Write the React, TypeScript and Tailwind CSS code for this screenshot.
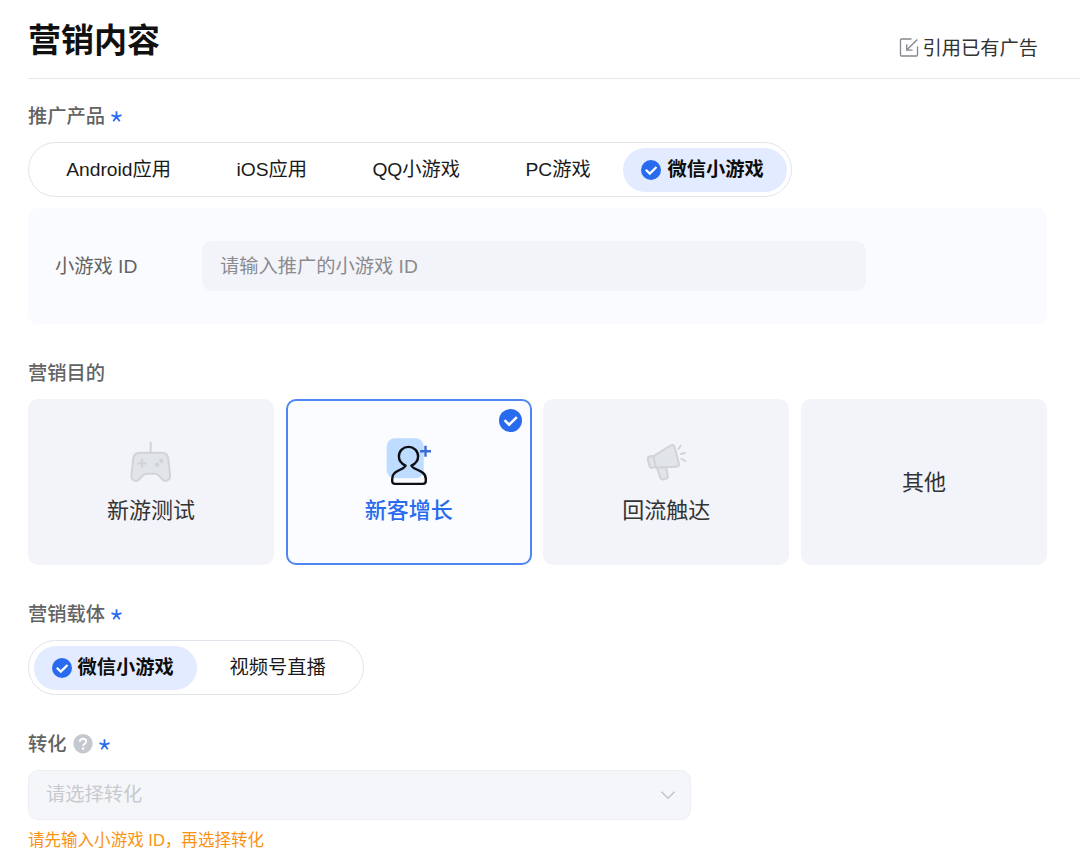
import type { ReactNode } from "react";
import clsx from "clsx";

const products = ["Android应用", "iOS应用", "QQ小游戏", "PC游戏", "微信小游戏"];
const carriers = ["微信小游戏", "视频号直播"];

function CheckBadge({ className }: { className?: string }) {
  return (
    <svg className={className} viewBox="0 0 20 20" fill="none">
      <circle cx="10" cy="10" r="10" fill="#296bef" />
      <path d="M4.8 9.700l4 3.900 6.700-6.600" stroke="#fff" strokeWidth="2.2" />
    </svg>
  );
}

function GamepadIcon() {
  return (
    <svg className="h-12 w-12" viewBox="0 0 48 48" fill="none" stroke="#d0d3d8" strokeWidth="2">
      <path
        d="M12.500 16.800h22.500c3.600 0 5.600 2 6.200 5.500l1.800 16.500c.6 5.400-4.800 8.200-8 4.400l-2.600-3c-1.400-1.700-2.600-2.500-4.700-2.500h-7.900c-2.100 0-3.300.8-4.700 2.500l-2.600 3c-3.200 3.800-8.600 1-8-4.400l1.800-16.500c.6-3.500 2.600-5.500 6.200-5.500z"
        fill="#e1e4e9"
      />
      <path d="M23.700 5.800v11" />
      <path d="M15 22.800v9M10.500 27.300h9" strokeWidth="2.200" />
      <circle cx="34.300" cy="24.700" r="2.200" fill="#d0d3d8" stroke="none" />
      <circle cx="30.300" cy="28.700" r="2.200" fill="#d0d3d8" stroke="none" />
    </svg>
  );
}

function NewUserIcon() {
  return (
    <svg className="h-12 w-12 overflow-visible" viewBox="0 0 48 48" fill="none">
      <rect x="1.700" y="2.300" width="37" height="40" rx="8" fill="#bedcff" />
      <path
        d="M20.600 29.700c-4-1.900-6.700-5.300-6.700-9.500 0-5.300 4.200-9.300 9.600-9.300s9.600 4 9.600 9.300c0 4.200-2.700 7.600-6.700 9.500 2.600 4.800 14.400 4.300 14.400 13.300v2c0 1.900-1 2.900-2.900 2.900H10.100c-1.900 0-2.900-1-2.900-2.900v-2c0-9 10.800-8.500 13.400-13.300z"
        stroke="#0d0f14"
        strokeWidth="2.400"
        strokeLinejoin="round"
      />
      <path d="M40.500 9.800v11M35 15.300h11" stroke="#3a6bd6" strokeWidth="2.400" />
    </svg>
  );
}

function MegaphoneIcon() {
  return (
    <svg className="h-12 w-12" viewBox="-.7 0 48 48" fill="none" stroke="#d0d3d8" strokeWidth="2" strokeLinecap="round" strokeLinejoin="round">
      <path d="M14.200 31.500l3.200 9.800c.7 2 2.300 2.600 4.200 2l1.400-.4c1.800-.6 2.400-1.700 2-3.500l-1.500-8.400z" fill="#e1e4e9" />
      <path d="M10.500 20.400L27.800 9.500c2-1.200 3.500-.6 4.100 1.500l4.300 16.200c.6 2.200-.6 3.500-2.900 3.500l-20.300.8z" fill="#e1e4e9" />
      <rect x="5.900" y="20.200" width="6" height="11.600" rx="2.500" transform="rotate(-14 8.900 26)" fill="#e1e4e9" />
      <path d="M36 12.600l2-2.900M38.200 18l4-.9M38.800 22.900l3.800 2.200" />
    </svg>
  );
}

const goals: { label: string; icon?: ReactNode }[] = [
  { label: "新游测试", icon: <GamepadIcon /> },
  { label: "新客增长", icon: <NewUserIcon /> },
  { label: "回流触达", icon: <MegaphoneIcon /> },
  { label: "其他" },
];

function FieldLabel({ children, required, help }: { children: ReactNode; required?: boolean; help?: boolean }) {
  return (
    <div className="flex h-7 items-center font-medium text-[#636363]">
      <span className="pt-0.5">{children}</span>
      {help && (
        <svg className="ml-[6px] h-5 w-5" viewBox="0 0 20 20" fill="none">
          <circle cx="10" cy="9.700" r="9.700" fill="#c5c8ce" />
          <path d="M6.800 7.700c0-1.900 1.400-3 3.200-3s3.200 1.100 3.200 2.800c0 2.300-3.100 2.200-3.100 4.600" stroke="#fff" strokeWidth="1.900" />
          <circle cx="10.100" cy="14.500" r="1.200" fill="#fff" />
        </svg>
      )}
      {required && (
        <svg className="mt-px ml-[6px] h-[11px] w-[11px]" viewBox="0 0 11 11" fill="none" stroke="#296bef" strokeWidth="1.800">
          <path d="M5.500 5.800V.3M5.500 5.800L.5 4.100M5.500 5.800l5-1.700M5.500 5.800l-3.200 4.500M5.500 5.800l3.200 4.500" />
        </svg>
      )}
    </div>
  );
}

function PillTabs({ items, active }: { items: string[]; active: string }) {
  return (
    <div className="flex h-[55px] w-fit items-center rounded-full border-[1.5px] border-[#e1e4eb] px-[4.5px] whitespace-nowrap">
      {items.map((item) => (
        <button
          key={item}
          className={clsx(
            "flex h-11 items-center rounded-full",
            item === active ? "bg-[#e2ebff] pr-[23px] pl-[18px] font-semibold text-[#0d0d0d]" : "px-[32.7px] text-[#1a1a1a]"
          )}
        >
          {item === active && <CheckBadge className="mr-[6px] h-5 w-5" />}
          <span>{item}</span>
        </button>
      ))}
    </div>
  );
}

export default function App() {
  return (
    <div className="h-[867px] w-[1080px] overflow-hidden bg-white pl-7 font-['Liberation_Sans','Noto_Sans_CJK_SC',sans-serif] text-[19.25px] leading-7">
      {/* Header */}
      <header className="flex h-[79px] items-center justify-between border-b border-[#e8e8ea] pr-[42px]">
        <h1 className="pt-1 text-[33px] leading-[48px] font-semibold text-[#111]">营销内容</h1>
        <button className="mt-[18px] flex items-center gap-[4px] text-[#333]">
          <svg className="h-5 w-5" viewBox="0 0 20 20" fill="none" stroke="#85888d" strokeWidth="1.300">
            <path d="M12.500 1H2.500q-1 0-1 1v15q0 1 1 1h15q1 0 1-1V8.500" />
            <path d="M18.300 1.500L8 11.800M7.700 6.300v5.800h5.800" />
          </svg>
          <span className="pt-0.5">引用已有广告</span>
        </button>
      </header>

      {/* Promoted product */}
      <section className="mt-[23px]">
        <FieldLabel required>推广产品</FieldLabel>
        <div className="mt-3">
          <PillTabs items={products} active="微信小游戏" />
        </div>
        <div className="mt-[11px] flex h-[116px] w-[1019px] items-center rounded-[10px] bg-[#fafbff] pl-[27px] text-[#636363]">
          <label className="w-[147px] pt-0.5">小游戏 ID</label>
          <div className="flex h-[50px] w-[664px] items-center rounded-[10px] bg-[#f3f4f9] px-[18px] pt-0.5 text-[#8b8b8f]">
            请输入推广的小游戏 ID
          </div>
        </div>
      </section>

      {/* Marketing goal */}
      <section className="mt-[35px]">
        <FieldLabel>营销目的</FieldLabel>
        <div className="mt-3 grid h-[166px] w-[1019px] grid-cols-4 gap-[11.5px] text-[22px] leading-8 text-[#333]">
          {goals.map(({ label, icon }) => {
            const selected = label === "新客增长";
            return (
              <button
                key={label}
                className={clsx(
                  "relative flex flex-col items-center justify-center rounded-[10px]",
                  selected ? "border-2 border-[#4f86f2] bg-[#fafcff] font-medium text-[#296bef]" : "bg-[#f3f4f9]",
                  icon && "pb-[2px]"
                )}
              >
                {icon}
                <span className={icon ? "mt-[11px]" : "pt-0.5"}>{label}</span>
                {selected && <CheckBadge className="absolute top-[8px] right-[8px] h-[23px] w-[23px]" />}
              </button>
            );
          })}
        </div>
      </section>

      {/* Carrier */}
      <section className="mt-[35px]">
        <FieldLabel required>营销载体</FieldLabel>
        <div className="mt-3">
          <PillTabs items={carriers} active="微信小游戏" />
        </div>
      </section>

      {/* Conversion */}
      <section className="mt-[35px]">
        <FieldLabel required help>转化</FieldLabel>
        <div className="mt-3 flex h-[50px] w-[663px] items-center justify-between rounded-[10px] border-[1.5px] border-[#eeeff4] bg-[#f5f6f9] pr-[15px] pl-[17px] text-[#c8cad0]">
          <span>请选择转化</span>
          <svg className="h-[14px] w-[14px]" viewBox="0 0 14 14" fill="none" stroke="#c2c4c8" strokeWidth="1.400">
            <path d="M.5 3.800L7 10.300l6.500-6.500" />
          </svg>
        </div>
        <p className="mt-[7px] text-[16.55px] text-[#fa9214]">请先输入小游戏 ID，再选择转化</p>
      </section>
    </div>
  );
}
